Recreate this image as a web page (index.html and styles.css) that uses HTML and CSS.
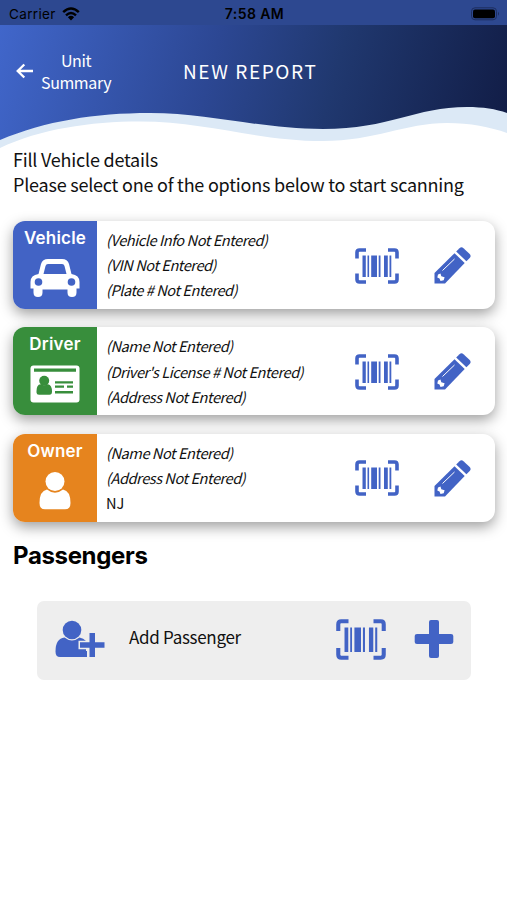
FILE: index.html
```html
<!DOCTYPE html>
<html lang="en">
<head>
  <meta charset="UTF-8">
  <title>New Report</title>
  <meta name="viewport" content="width=device-width, initial-scale=1">
  <link rel="stylesheet" href="styles.css">
</head>
<body>
  <!-- Shared icons -->
  <svg class="sprite" width="0" height="0">
    <symbol id="icon-scan" viewBox="0 0 44 36">
      <path d="M2 10.500V4.500Q2 2 4.500 2H11M33 2H39.500Q42 2 42 4.500V10.500M42 25.500V31.500Q42 34 39.500 34H33M11 34H4.500Q2 34 2 31.500V25.500" fill="none" stroke="currentColor" stroke-width="3.600"/>
      <path d="M7.500 7.500h3.300v21.500h-3.300zM12.500 7.500h1.600v21.500h-1.600zM16.200 7.500h5.800v21.500h-5.800zM23.700 7.500h1.800v21.500h-1.800zM29 7.500h3.800v21.500h-3.800zM34.500 7.500h1.800v21.500h-1.800z" fill="currentColor"/>
    </symbol>
    <symbol id="icon-pencil" viewBox="0 0 37 37">
      <path d="M0.500 26L20.500 6.200L30.700 16L11 36.500H0.500Z" fill="currentColor"/>
      <path d="M22.200 4.500L25.500 1.200Q27.500 -0.500 29.500 1.300L35.700 7Q37.500 9 35.700 11L32.400 14.300Z" fill="currentColor"/>
      <path d="M8.500 23.500L20.500 12" stroke="#fff" stroke-width="1"/>
      <path d="M4 27.500L6.500 26.500L7.300 29.300L10.600 30.300L9.700 33.300L6.500 34L5.500 31.500L3.300 30.500Z" fill="#fff"/>
    </symbol>
  </svg>

  <header class="header">
    <div class="status-bar">
      <div class="carrier">
        Carrier
        <svg width="18" height="14" viewBox="0 0 18 14">
          <path d="M1.200 5.200Q9 -2.400 16.800 5.200M4 8.300Q9 3.600 14 8.300" fill="none" stroke="#000" stroke-width="2.400"/>
          <path d="M5.900 10.200Q9 7.500 12.100 10.200L9 13.500Z" fill="#000"/>
        </svg>
      </div>
      <div class="time">7:58 AM</div>
      <div class="battery">
        <svg width="30" height="14" viewBox="0 0 30 14">
          <rect x="1.500" y="0.800" width="25" height="12" rx="3.500" fill="none" stroke="#1d2e5f"/>
          <rect x="3" y="2.500" width="22" height="8.700" rx="2" fill="#000"/>
          <path d="M28 4.800Q30 6.800 28 8.800Z" fill="#1d2e5f"/>
        </svg>
      </div>
    </div>
    <nav class="nav">
      <a class="back">
        <svg width="18" height="16" viewBox="0 0 18 16">
          <path d="M17 8H2M8.300 1.500L1.700 8L8.300 14.500" fill="none" stroke="#fff" stroke-width="2.300"/>
        </svg>
        <span>Unit<br>Summary</span>
      </a>
      <h1 class="title">NEW REPORT</h1>
    </nav>
    <svg class="wave" width="507" height="42" viewBox="0 0 507 42">
      <path d="M0 33C45 14 95 6 150 6C210 6 260 22 323 22C390 22 415 0 467 0C483 0 496 2 507 6V42H0Z" fill="#dce9f6"/>
      <path d="M0 41C40 22 90 14.500 140 14.500C205 14.500 258 34 323 34C375 34 405 16 447 16C470 16 490 20 507 26V42H0Z" fill="#fff"/>
    </svg>
  </header>

  <main class="content">
    <p class="intro">Fill Vehicle details<br>Please select one of the options below to start scanning</p>

    <div class="card">
      <div class="badge vehicle">
        <span>Vehicle</span>
        <svg width="50" height="40" viewBox="0 0 50 40">
          <path d="M8.500 16L11 6Q12.500 1 18 1H32Q37.500 1 39 6L41.500 16Q49.500 17 49.500 24V30.500H46.500V34.500Q46.500 39 42 39Q37.500 39 37.500 34.500V31.500H12.500V34.500Q12.500 39 8 39Q3.500 39 3.500 34.500V30.500H0.500V24Q0.500 17 8.500 16Z" fill="#fff"/>
          <path d="M13.500 16L15.500 8Q16 6 18 6H32Q34 6 34.500 8L36.500 16Z" fill="#4263c5"/>
          <circle cx="8.500" cy="24" r="3.800" fill="#4263c5"/>
          <circle cx="41.500" cy="24" r="3.800" fill="#4263c5"/>
        </svg>
      </div>
      <div class="details">
        <em>(Vehicle Info Not Entered)</em>
        <em>(VIN Not Entered)</em>
        <em>(Plate # Not Entered)</em>
      </div>
      <div class="actions">
        <svg width="44" height="36"><use href="#icon-scan"/></svg>
        <svg width="37" height="37"><use href="#icon-pencil"/></svg>
      </div>
    </div>

    <div class="card">
      <div class="badge driver">
        <span>Driver</span>
        <svg width="50" height="40" viewBox="0 0 50 40">
          <rect x="0.500" y="1.500" width="49" height="37" rx="3" fill="#fff"/>
          <path d="M4 4.500H46V7.700H4ZM25 17.300H43V19.600H25ZM25 21.500H34V23.800H25ZM37 21.500H43V23.800H37ZM25 27H43V29.500H25ZM6.500 27Q6.500 20.700 10.500 20.200Q14 22.500 18 20.200Q22 21 22 27.500Q22 30.800 19.500 30.800H9Q6.500 30.800 6.500 28.500Z" fill="#388e3c"/>
          <circle cx="14.200" cy="16.800" r="5" fill="#388e3c"/>
        </svg>
      </div>
      <div class="details">
        <em>(Name Not Entered)</em>
        <em>(Driver's License # Not Entered)</em>
        <em>(Address Not Entered)</em>
      </div>
      <div class="actions">
        <svg width="44" height="36"><use href="#icon-scan"/></svg>
        <svg width="37" height="37"><use href="#icon-pencil"/></svg>
      </div>
    </div>

    <div class="card">
      <div class="badge owner">
        <span>Owner</span>
        <svg width="50" height="40" viewBox="0 0 50 40">
          <circle cx="25" cy="10.500" r="9.500" fill="#fff"/>
          <path d="M17 18.500Q25 25 33 18.500Q40.500 20 40.500 32Q40.500 38.300 35 38.300H15Q9.500 38.300 9.500 32Q9.500 20 17 18.500Z" fill="#fff"/>
        </svg>
      </div>
      <div class="details">
        <em>(Name Not Entered)</em>
        <em>(Address Not Entered)</em>
        <span>NJ</span>
      </div>
      <div class="actions">
        <svg width="44" height="36"><use href="#icon-scan"/></svg>
        <svg width="37" height="37"><use href="#icon-pencil"/></svg>
      </div>
    </div>

    <h2>Passengers</h2>

    <div class="add-passenger">
      <svg width="50" height="38" viewBox="0 0 50 38">
        <circle cx="17" cy="10" r="9.300" fill="#4263c5"/>
        <path d="M9.500 17.500Q17 23.500 24.500 17.500Q28.500 18 31 21V31H32V37H5Q0.500 37 0.500 31.500Q0.500 18.500 9.500 17.500Z" fill="#4263c5"/>
        <path d="M33 11.500H41.500V20.800H50V29.300H41.500V38H33V29.300H23.500V20.800H33Z" fill="#eee"/>
        <path d="M34.500 13H40V22.300H49.500V27.800H40V37H34.500V27.800H25V22.300H34.500Z" fill="#4263c5"/>
      </svg>
      <span class="add-label">Add Passenger</span>
      <svg class="scan" width="50" height="41"><use href="#icon-scan"/></svg>
      <svg width="40" height="40" viewBox="0 0 40 40">
        <path d="M17 1H23Q25 1 25 3V15H37Q39.300 15 39.300 17V23Q39.300 25 37 25H25V37Q25 39 23 39H17Q15 39 15 37V25H3Q0.700 25 0.700 23V17Q0.700 15 3 15H15V3Q15 1 17 1Z" fill="#4263c5"/>
      </svg>
    </div>
  </main>
</body>
</html>
```

FILE: styles.css
```css
* {
  box-sizing: border-box;
}
body {
  margin: 0;
  background: #fff;
  color: #111;
  font-family: 'Noto Sans CJK SC', sans-serif;
}
svg {
  display: block;
  flex-shrink: 0;
}
.sprite {
  position: absolute;
}
.header {
  background: linear-gradient(105deg, #4167cc 0%, #2c4793 42%, #20386f 65%, #111c45 100%);
}
.status-bar {
  display: grid;
  grid-template-columns: 1fr auto 1fr;
  align-items: center;
  height: 25px;
  padding: 2px 7px 0 9px;
  background: #2d4890;
  color: #000;
  font-family: Inter, sans-serif;
  font-size: 13.5px;
}
.carrier {
  display: flex;
  align-items: center;
  gap: 6px;
  letter-spacing: 0.35px;
}
.time {
  font-weight: 600;
  font-size: 14px;
  letter-spacing: 0.4px;
}
.battery {
  justify-self: end;
}
.nav {
  display: flex;
  align-items: center;
  height: 82px;
  padding: 9px 0 0 16px;
  color: #fff;
}
.back {
  display: flex;
  align-items: center;
  gap: 7px;
  width: 167px;
  font-size: 16px;
  line-height: 22px;
  letter-spacing: -0.4px;
  text-align: center;
}
.title {
  margin: 0;
  font-size: 19px;
  font-weight: 400;
  letter-spacing: 1.6px;
}
.wave {
  width: 100%;
}
.content {
  padding: 0 12px 0 13px;
}
.intro {
  margin: -2px 0 24px;
  font-size: 18px;
  line-height: 25px;
  letter-spacing: -0.22px;
  white-space: nowrap;
}
.card {
  display: flex;
  height: 88px;
  margin-bottom: 18.300px;
  border-radius: 12px;
  background: #fff;
  box-shadow: 0 5px 14px rgba(0,0,0,0.38);
}
.badge {
  display: flex;
  flex-direction: column;
  align-items: center;
  width: 84px;
  padding-top: 6px;
  border-radius: 12px 0 0 12px;
  color: #fff;
  font-family: Inter, sans-serif;
  font-size: 17px;
  font-weight: 600;
  line-height: 22px;
  letter-spacing: 0.2px;
}
.badge svg {
  margin-top: 9px;
}
.vehicle {
  background: #4263c5;
}
.driver {
  background: #388e3c;
}
.owner {
  background: #e6841e;
}
.details {
  display: flex;
  flex-direction: column;
  padding: 6px 0 0 9px;
  font-size: 14.6px;
  line-height: 25.200px;
  white-space: nowrap;
}
.details em {
  letter-spacing: -0.45px;
}
.actions {
  display: flex;
  align-items: center;
  gap: 35px;
  margin-left: auto;
  padding: 1px 24px 0 0;
  color: #4263c5;
}
h2 {
  margin: -1px 0 28px;
  font-family: Inter, sans-serif;
  font-size: 24px;
  font-weight: 700;
  line-height: 34px;
  letter-spacing: -0.35px;
  color: #000;
}
.add-passenger {
  display: flex;
  align-items: center;
  height: 79px;
  margin: 0 24px 0 24px;
  padding: 0 17px 2px 18px;
  border-radius: 7px;
  background: #eee;
  color: #4263c5;
}
.add-label {
  margin-left: 24px;
  padding-bottom: 5px;
  color: #111;
  font-size: 17px;
  letter-spacing: -0.3px;
}
.scan {
  margin: 0 28px 0 auto;
}
```
